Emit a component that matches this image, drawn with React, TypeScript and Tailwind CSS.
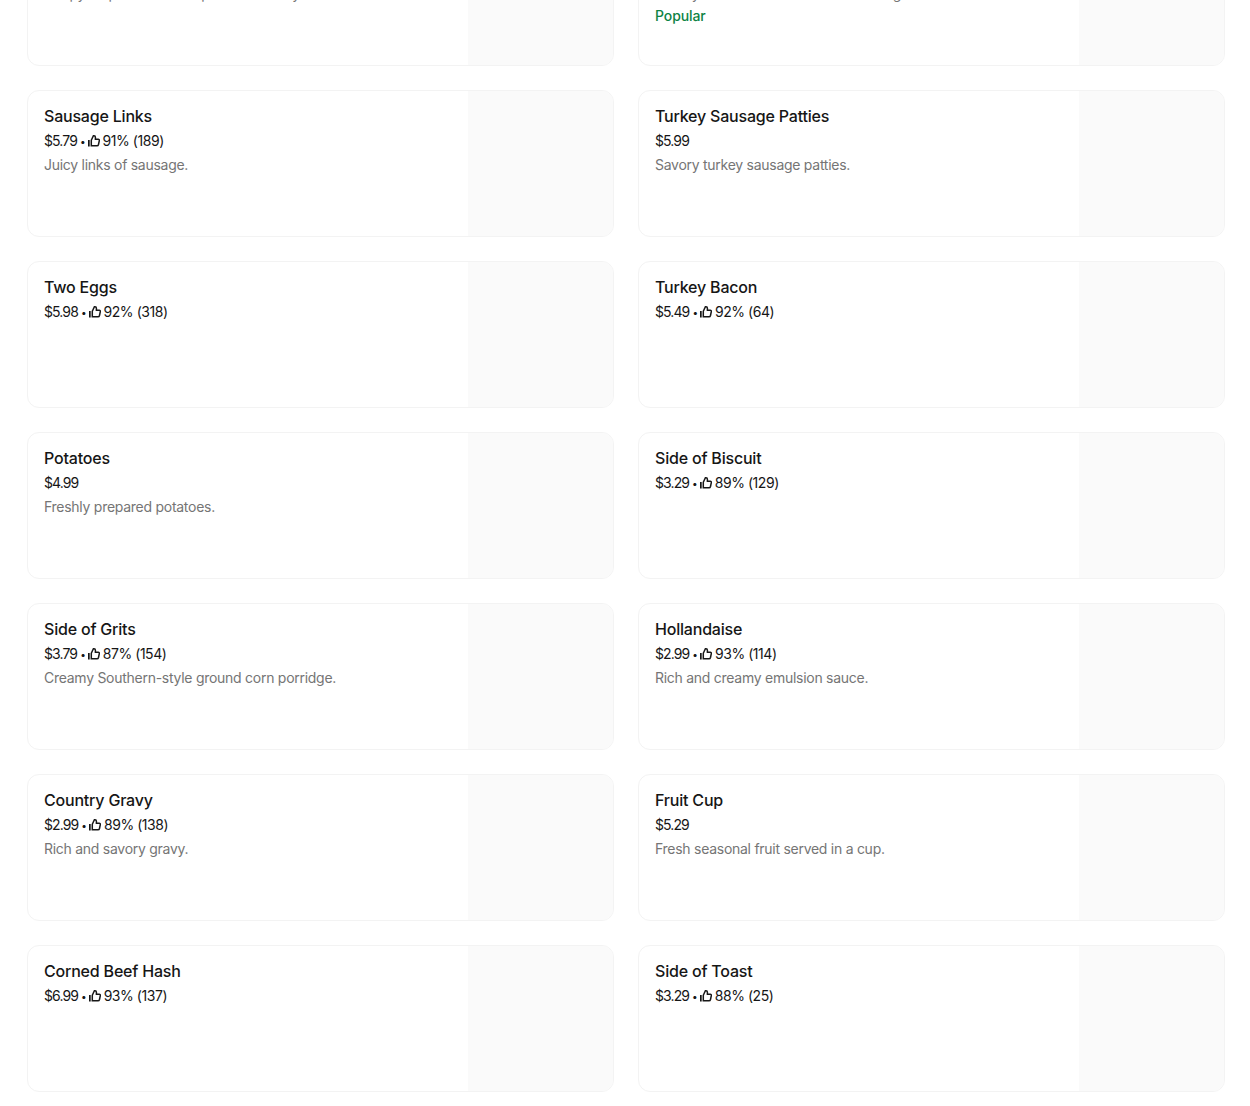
import React from "react";

type Item = { name: string; price: string; rating?: string; desc?: string; popular?: boolean };

const items: Item[] = [
  { name: "Breakfast Sausage", price: "$5.79", desc: "Crispy on pork links and pan-seared dry." },
  { name: "Bacon", price: "$5.99", desc: "Savory slices of bacon for the morning.", popular: true },
  { name: "Sausage Links", price: "$5.79", rating: "91% (189)", desc: "Juicy links of sausage." },
  { name: "Turkey Sausage Patties", price: "$5.99", desc: "Savory turkey sausage patties." },
  { name: "Two Eggs", price: "$5.98", rating: "92% (318)" },
  { name: "Turkey Bacon", price: "$5.49", rating: "92% (64)" },
  { name: "Potatoes", price: "$4.99", desc: "Freshly prepared potatoes." },
  { name: "Side of Biscuit", price: "$3.29", rating: "89% (129)" },
  { name: "Side of Grits", price: "$3.79", rating: "87% (154)", desc: "Creamy Southern-style ground corn porridge." },
  { name: "Hollandaise", price: "$2.99", rating: "93% (114)", desc: "Rich and creamy emulsion sauce." },
  { name: "Country Gravy", price: "$2.99", rating: "89% (138)", desc: "Rich and savory gravy." },
  { name: "Fruit Cup", price: "$5.29", desc: "Fresh seasonal fruit served in a cup." },
  { name: "Corned Beef Hash", price: "$6.99", rating: "93% (137)" },
  { name: "Side of Toast", price: "$3.29", rating: "88% (25)" },
];

function Thumb() {
  return (
    <svg width="12" height="12" viewBox="0 0 12 12" fill="none" className="ml-[2px] mr-[3px] shrink-0">
      <path d="M0 5H1.7V11.5H0V5Z" fill="#161616" />
      <path
        d="M3.3 5.2L5.4 0.8H6C6.9 0.8 7.4 1.4 7.4 2.2V4.2H10.2C11.1 4.2 11.5 4.9 11.3 5.7L10.5 9.5C10.3 10.3 9.8 10.8 9 10.8H3.3V5.2Z"
        stroke="#161616"
        strokeWidth="1.5"
      />
    </svg>
  );
}

function Card({ item }: { item: Item }) {
  return (
    <div className="flex h-[147px] overflow-hidden rounded-xl border border-[#f3f3f3] bg-white">
      <div className="min-w-0 flex-1 px-4 pt-[15px]">
        <div className="text-base font-medium leading-5 tracking-[-0.2px] text-[#161616]">{item.name}</div>
        <div className="mt-[5px] flex h-5 items-center text-sm leading-5 text-[#161616]">
          <span className="tracking-[-0.9px]">{item.price}</span>
          {item.rating && (
            <>
              <span className="ml-[3px] text-[10px]">•</span>
              <Thumb />
              <span className="tracking-[-0.45px]">{item.rating}</span>
            </>
          )}
        </div>
        {item.desc && <div className="mt-1 text-sm leading-5 tracking-[-0.27px] text-[#757575]">{item.desc}</div>}
        {item.popular && (
          <div className="mt-0.5 text-sm font-medium leading-5 tracking-[-0.1px] text-[#0e8345]">Popular</div>
        )}
      </div>
      <div className="w-[145px] shrink-0 bg-[#fafafa]" />
    </div>
  );
}

export default function App() {
  return (
    <div className="h-[1106px] overflow-hidden bg-white font-['Inter',sans-serif]">
      <div className="-mt-[81px] grid grid-cols-2 gap-6 pl-[27px] pr-[25px]">
        {items.map((item) => (
          <Card key={item.name} item={item} />
        ))}
      </div>
    </div>
  );
}
